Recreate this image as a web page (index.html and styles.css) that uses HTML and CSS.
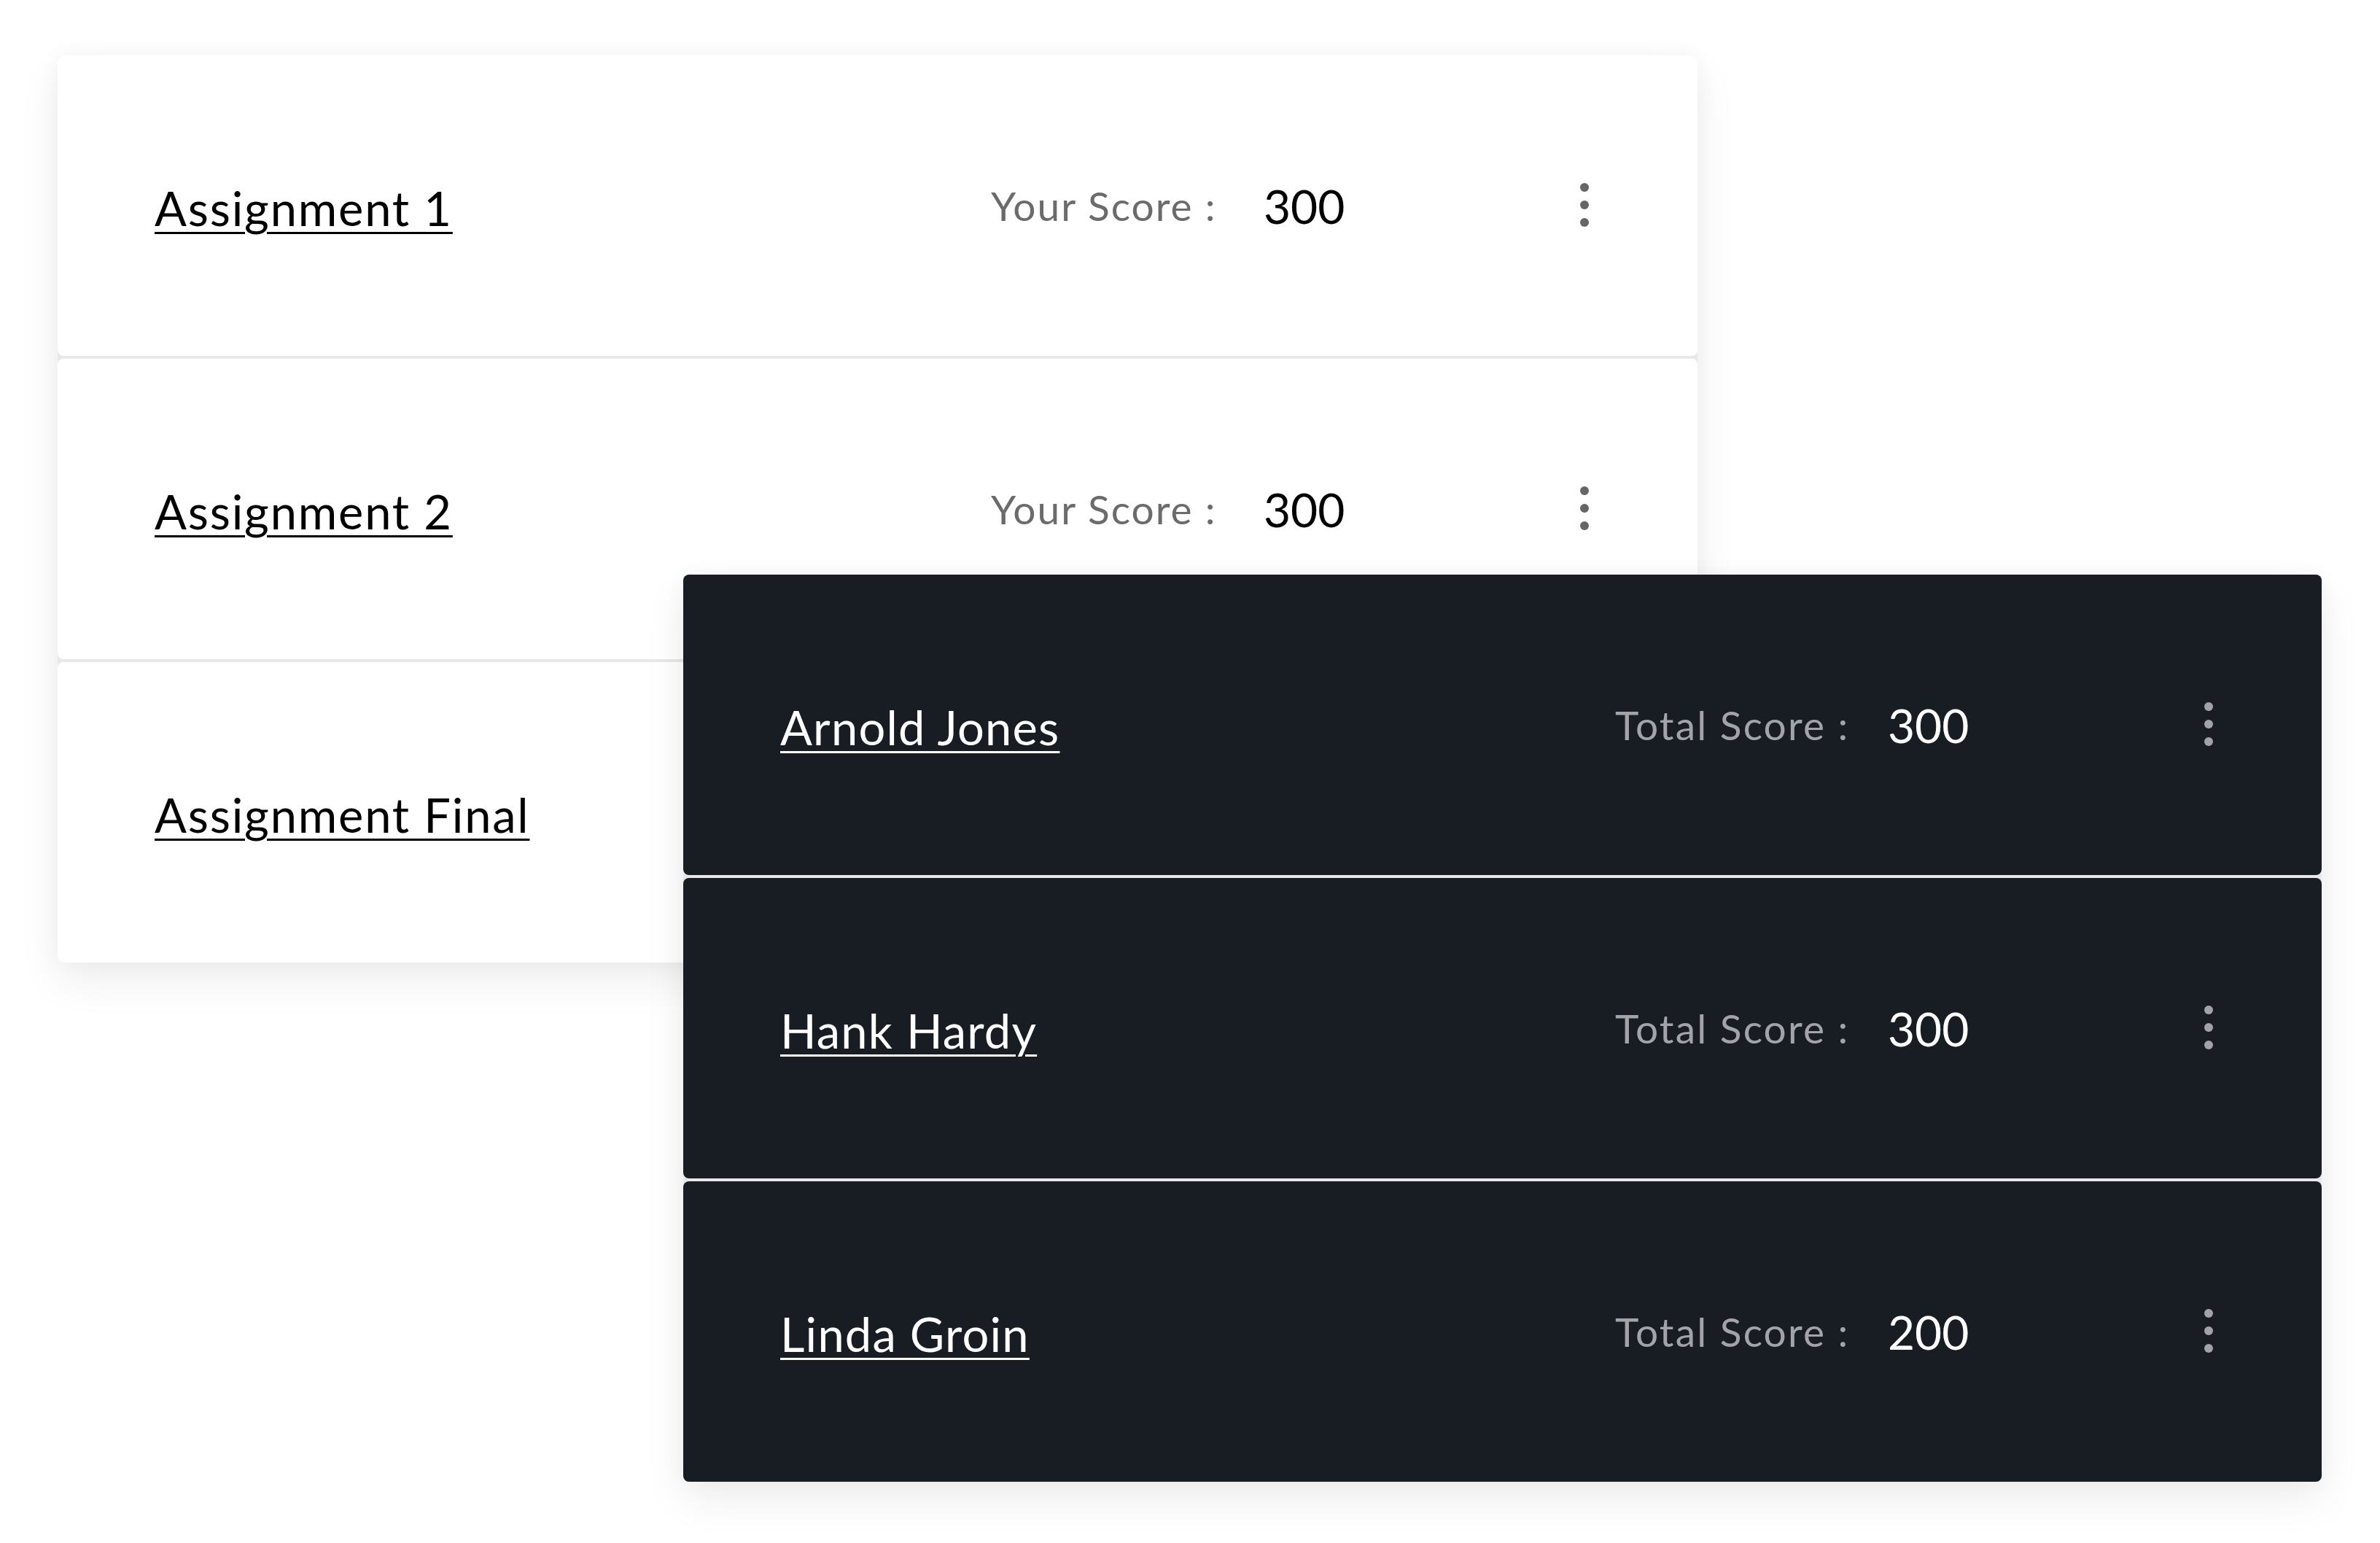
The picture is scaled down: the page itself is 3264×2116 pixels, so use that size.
FILE: index.html
```html
<!DOCTYPE html>
<html lang="en">
<head>
<meta charset="utf-8">
<title>Scores</title>
<link rel="stylesheet" href="styles.css">
</head>
<body>
<main class="stage">
  <section class="stack stack--light">
    <div class="row">
      <a class="name" href="#">Assignment 1</a>
      <span class="label">Your Score :</span>
      <span class="value">300</span>
      <span class="kebab"><i></i><i></i><i></i></span>
    </div>
    <div class="row">
      <a class="name" href="#">Assignment 2</a>
      <span class="label">Your Score :</span>
      <span class="value">300</span>
      <span class="kebab"><i></i><i></i><i></i></span>
    </div>
    <div class="row">
      <a class="name" href="#">Assignment Final</a>
      <span class="label">Your Score :</span>
      <span class="value">300</span>
      <span class="kebab"><i></i><i></i><i></i></span>
    </div>
  </section>

  <section class="stack stack--dark">
    <div class="row">
      <a class="name" href="#">Arnold Jones</a>
      <span class="label">Total Score :</span>
      <span class="value">300</span>
      <span class="kebab"><i></i><i></i><i></i></span>
    </div>
    <div class="row">
      <a class="name" href="#">Hank Hardy</a>
      <span class="label">Total Score :</span>
      <span class="value">300</span>
      <span class="kebab"><i></i><i></i><i></i></span>
    </div>
    <div class="row">
      <a class="name" href="#">Linda Groin</a>
      <span class="label">Total Score :</span>
      <span class="value">200</span>
      <span class="kebab"><i></i><i></i><i></i></span>
    </div>
  </section>
</main>
</body>
</html>
```

FILE: styles.css
```css
html, body {
  margin: 0;
  padding: 0;
  background: #ffffff;
}

body {
  font-family: Lato, "Noto Sans", "Liberation Sans", sans-serif;
  width: 3264px;
  height: 2116px;
  overflow: hidden;
}

.stage {
  position: relative;
  padding: 76px 0 0 79px;
}

.stack {
  width: 2249px;
  display: flex;
  flex-direction: column;
  gap: 4px;
  background: #e8e8e8;
  border-radius: 8px;
  box-shadow: 0 24px 60px rgba(0, 0, 0, 0.07), 0 0 30px rgba(0, 0, 0, 0.04);
}

.stack--dark {
  position: absolute;
  left: 937px;
  top: 788px;
  width: 2247px;
}

.row {
  height: 412px;
  box-sizing: border-box;
  border-radius: 8px;
  display: grid;
  grid-template-columns: 1fr 374px 420px 40px;
  align-items: center;
  padding: 0 135px 0 133px;
}

.stack--light .row {
  background: #ffffff;
}

.stack--dark .row {
  background: #181c23;
}

.name {
  font-size: 65px;
  letter-spacing: 1.8px;
  text-decoration: underline;
  text-decoration-thickness: 3px;
  text-underline-offset: 8px;
  color: #000000;
  justify-self: start;
  line-height: 1;
  padding-top: 6px;
}

.stack--dark .name {
  color: #ffffff;
  letter-spacing: 1.2px;
}

.label {
  font-size: 55px;
  letter-spacing: 2px;
  color: #6b6b6b;
  line-height: 1;
}

.stack--dark .label {
  color: #a2a4a9;
  letter-spacing: 2.2px;
}

.value {
  font-size: 64px;
  color: #000000;
  line-height: 1;
  padding-top: 2px;
}

.stack--dark .value {
  color: #ffffff;
}

.kebab {
  display: flex;
  flex-direction: column;
  align-items: center;
  gap: 12px;
  margin-top: -2px;
}

.kebab i {
  display: block;
  width: 12px;
  height: 12px;
  border-radius: 50%;
  background: #666666;
}

.stack--dark .kebab i {
  background: #a1a3a7;
}
```
